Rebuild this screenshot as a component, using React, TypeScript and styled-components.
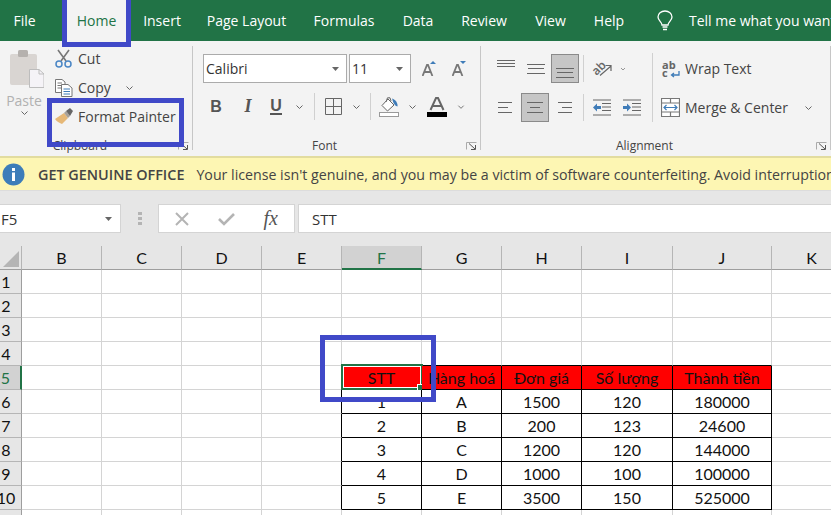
import React from 'react';
import styled, { createGlobalStyle } from 'styled-components';

const GlobalStyle = createGlobalStyle`
  html, body {
    margin: 0;
    padding: 0;
    background: #fff;
    font-family: "Open Sans", "Noto Sans", sans-serif;
  }
`;

const cellFont = `Lato, "Open Sans", sans-serif`;

const Window = styled.div`
  position: relative;
  width: 831px;
  height: 515px;
  overflow: hidden;
  display: flex;
  flex-direction: column;
  background: #fff;
`;

/* ---- tabs ---- */
const TabBar = styled.div`
  height: 41px;
  flex: none;
  background: #217346;
  display: flex;
  align-items: stretch;
  white-space: nowrap;
  overflow: hidden;
`;
const Tab = styled.div<{ $active?: boolean; $w: number }>`
  width: ${(p) => p.$w}px;
  flex: none;
  display: flex;
  align-items: center;
  justify-content: center;
  font-size: 14px;
  color: ${(p) => (p.$active ? '#217346' : '#fff')};
  background: ${(p) => (p.$active ? '#f3f3f3' : 'transparent')};
`;
const TellMe = styled.div`
  display: flex;
  align-items: center;
  gap: 16px;
  margin-left: 19px;
  color: #fff;
  font-size: 14px;
`;

/* ---- ribbon ---- */
const Ribbon = styled.div`
  height: 115px;
  flex: none;
  background: #f3f3f3;
  display: flex;
  font-size: 14px;
  color: #444;
`;
const Group = styled.div<{ $w: number }>`
  position: relative;
  width: ${(p) => p.$w}px;
  flex: none;
  margin-top: 5px;
  height: 104px;
  box-sizing: border-box;
  border-right: 1px solid #c6c6c6;
  display: flex;
  flex-direction: column;
`;
const GroupBody = styled.div`
  flex: 1;
  display: flex;
`;
const GroupLabel = styled.div<{ $pr: number }>`
  height: 19px;
  margin-bottom: -5px;
  padding-right: ${(p) => p.$pr}px;
  text-align: center;
  font-size: 12px;
  line-height: 19px;
  color: #444;
`;
const Launcher = styled.svg`
  position: absolute;
  right: 3px;
  bottom: 0;
`;
const PasteCol = styled.div`
  width: 53px;
  flex: none;
  display: flex;
  flex-direction: column;
  align-items: center;
  color: #b1b1b1;
  padding-top: 4px;
  padding-right: 5px;
  box-sizing: border-box;
`;
const PasteArt = styled.div`
  margin-left: 5px;
  height: 38px;
`;
const PasteLabel = styled.div`
  margin-top: 3px;
  font-size: 14px;
  line-height: 19px;
`;
const ClipActions = styled.div`
  display: flex;
  flex-direction: column;
  margin-top: -2px;
`;
const ClipRow = styled.div`
  height: 29px;
  display: flex;
  align-items: center;
  gap: 4px;
  white-space: nowrap;
`;
const IconSlot = styled.span`
  width: 21px;
  display: flex;
  justify-content: center;
  flex: none;
`;
const CopyChevron = styled.span`
  display: flex;
  margin-left: 10px;
`;
const Column = styled.div<{ $pad?: string; $gap?: number }>`
  display: flex;
  flex-direction: column;
  gap: ${(p) => p.$gap ?? 0}px;
  padding: ${(p) => p.$pad ?? 0};
`;
const Row = styled.div<{ $gap?: number }>`
  display: flex;
  align-items: center;
  gap: ${(p) => p.$gap ?? 0}px;
`;
const Combo = styled.div<{ $w: number }>`
  width: ${(p) => p.$w}px;
  height: 29px;
  box-sizing: border-box;
  background: #fff;
  border: 1px solid #ababab;
  display: flex;
  align-items: center;
  justify-content: space-between;
  padding: 0 7px 0 2px;
  font-size: 14px;
  color: #333;
`;
const ToolSlot = styled.div<{ $w: number; $on?: boolean }>`
  width: ${(p) => p.$w}px;
  height: 29px;
  box-sizing: border-box;
  flex: none;
  display: flex;
  align-items: center;
  justify-content: center;
  background: ${(p) => (p.$on ? '#c6c6c6' : 'transparent')};
  border: ${(p) => (p.$on ? '1px solid #8a8a8a' : 'none')};
`;
const Bold = styled.span<{ $under?: boolean }>`
  font-family: "Liberation Sans", sans-serif;
  font-size: 16px;
  font-weight: 700;
  color: #555;
  border-bottom: ${(p) => (p.$under ? '2px solid #555' : 'none')};
  line-height: ${(p) => (p.$under ? '14px' : 'normal')};
`;
const Italic = styled.span`
  font-family: "Liberation Serif", serif;
  font-size: 18px;
  font-weight: 700;
  font-style: italic;
  color: #555;
`;
const VSep = styled.div`
  width: 1px;
  height: 27px;
  background: #d0d0d0;
  flex: none;
`;
const AlignTools = styled(Column)`
  width: 161px;
  flex: none;
`;
const TallDivider = styled.div`
  width: 1px;
  height: 69px;
  margin: 7px 8px 0 0;
  background: #d0d0d0;
  flex: none;
`;
const WideLabel = styled.div`
  display: flex;
  align-items: center;
  gap: 5px;
  white-space: nowrap;
  height: 29px;
`;
const WideIcon = styled.span`
  width: 19px;
  display: flex;
  justify-content: flex-end;
  flex: none;
`;

/* ---- notice ---- */
const Notice = styled.div`
  height: 32px;
  flex: none;
  background: #fdf6b3;
  border-top: 2px solid #e2dc9f;
  border-bottom: 1px solid #dcdcdc;
  display: flex;
  align-items: center;
  padding-left: 2px;
  font-size: 14.2px;
  color: #444;
  white-space: nowrap;
  overflow: hidden;
`;
const NoticeIcon = styled.svg`
  flex: none;
`;
const NoticeTitle = styled.b`
  font-weight: 600;
  font-size: 14.4px;
  margin: 0 12px 0 13px;
  flex: none;
`;

/* ---- formula bar ---- */
const FormulaBar = styled.div`
  height: 55px;
  flex: none;
  box-sizing: border-box;
  background: #e6e6e6;
  padding: 13px 0 13px;
  display: flex;
  align-items: stretch;
`;
const NameBox = styled.div`
  width: 121px;
  flex: none;
  box-sizing: border-box;
  background: #fff;
  border: 1px solid #d4d4d4;
  border-left: none;
  display: flex;
  align-items: center;
  justify-content: space-between;
  padding: 0 8px 0 1px;
  font-size: 15px;
  color: #333;
`;
const Grip = styled.div`
  width: 37px;
  flex: none;
  display: flex;
  align-items: center;
  justify-content: center;
`;
const FxBox = styled.div`
  width: 137px;
  flex: none;
  box-sizing: border-box;
  background: #fff;
  border: 1px solid #d4d4d4;
  margin-right: 3px;
  display: flex;
  align-items: center;
  justify-content: space-between;
  padding: 0 16px 0 15px;
`;
const FxText = styled.span`
  font-family: "Liberation Serif", serif;
  font-style: italic;
  font-size: 20px;
  color: #555;
`;
const FormulaInput = styled.div`
  flex: 1;
  box-sizing: border-box;
  background: #fff;
  border: 1px solid #d4d4d4;
  border-right: none;
  padding-left: 13px;
  display: flex;
  align-items: center;
  font-size: 15px;
  color: #333;
`;

/* ---- sheet ---- */
const Sheet = styled.div`
  flex: 1;
  display: grid;
  grid-template-columns: 22px 80px 80px 80px 80px 80px 80px 80px 91px 99px 80px;
  grid-auto-rows: 24px;
  grid-template-rows: 24px;
  font-family: ${cellFont};
  font-size: 16px;
  color: #111;
  background: #fff;
`;
const Corner = styled.div`
  background: #e6e6e6;
  border-right: 1px solid #b5b5b5;
  border-bottom: 1px solid #9e9e9e;
  display: flex;
  align-items: flex-end;
  justify-content: flex-end;
  padding: 0 2px 2px 0;
`;
const ColHead = styled.div<{ $sel?: boolean }>`
  background: ${(p) => (p.$sel ? '#d2d2d2' : '#e6e6e6')};
  color: ${(p) => (p.$sel ? '#217346' : '#111')};
  border-right: 1px solid #b5b5b5;
  border-bottom: ${(p) => (p.$sel ? '2px solid #217346' : '1px solid #9e9e9e')};
  display: flex;
  align-items: center;
  justify-content: center;
`;
const RowHead = styled.div<{ $sel?: boolean }>`
  background: ${(p) => (p.$sel ? '#d2d2d2' : '#e6e6e6')};
  color: ${(p) => (p.$sel ? '#217346' : '#111')};
  border-right: ${(p) => (p.$sel ? '2px solid #217346' : '1px solid #9e9e9e')};
  border-bottom: 1px solid #b5b5b5;
  display: flex;
  align-items: center;
  justify-content: center;
  padding-right: 9px;
`;
const Cell = styled.div<{ $fill?: boolean; $r?: boolean; $b?: boolean }>`
  position: relative;
  background: ${(p) => (p.$fill ? '#ff0000' : '#fff')};
  border-right: 1px solid ${(p) => (p.$r ? '#000' : '#d4d4d4')};
  border-bottom: 1px solid ${(p) => (p.$b ? '#000' : '#d4d4d4')};
  display: flex;
  align-items: center;
  justify-content: center;
  white-space: nowrap;
`;
const Selection = styled.div`
  position: absolute;
  left: -1px;
  top: -2px;
  right: -2px;
  bottom: -1px;
  border: 2px solid #217346;
  box-shadow: inset 0 0 0 1px #fff;
  pointer-events: none;
`;
const Handle = styled.div`
  position: absolute;
  right: -3px;
  bottom: -3px;
  width: 5px;
  height: 5px;
  background: #217346;
  border: 1px solid #fff;
`;

/* ---- the blue marks drawn over the screenshot ---- */
const Mark = styled.div<{ $x: number; $y: number; $w: number; $h: number }>`
  position: absolute;
  left: ${(p) => p.$x}px;
  top: ${(p) => p.$y}px;
  width: ${(p) => p.$w}px;
  height: ${(p) => p.$h}px;
  box-sizing: border-box;
  border: 5px solid #4049c8;
  pointer-events: none;
`;

const Chevron = () => (
  <svg width="9" height="6" viewBox="0 0 9 6">
    <path d="M1.5 1.5 L4.5 4.5 L7.5 1.5" fill="none" stroke="#666" strokeWidth="1" />
  </svg>
);
const ComboArrow = () => (
  <svg width="7" height="4" viewBox="0 0 7 4">
    <path d="M0 0 H7 L3.5 4 Z" fill="#666" />
  </svg>
);
const Corners = () => (
  <Launcher width="11" height="8" viewBox="0 0 11 8">
    <path d="M.5 7.5 V.5 H10.5" fill="none" stroke="#aaa" />
    <path d="M3 1.5 L9 7 M9.5 3 V7.5 H5" fill="none" stroke="#555" />
  </Launcher>
);
const PasteIcon = () => (
  <svg width="35" height="38" viewBox="0 0 35 38">
    <rect x="1" y="4" width="27" height="31" rx="2" fill="#d9d5d2" />
    <rect x="9" y="0" width="10" height="7" rx="1.5" fill="#b5b1ae" />
    <path d="M20.5 19.5 H30 L35 24 V37.5 H20.5 Z" fill="#f5f3f7" stroke="#bdbdbd" />
    <path d="M30 19.5 V24 H35" fill="none" stroke="#bdbdbd" />
  </svg>
);
const ScissorsIcon = () => (
  <svg width="17" height="19" viewBox="0 0 17 19">
    <path d="M3 1 L11 12 M14 1 L6 12" stroke="#777" strokeWidth="1.6" fill="none" />
    <circle cx="4" cy="15" r="3" fill="none" stroke="#4a86c5" strokeWidth="1.5" />
    <circle cx="13" cy="15" r="3" fill="none" stroke="#4a86c5" strokeWidth="1.5" />
  </svg>
);
const CopyIcon = () => (
  <svg width="18" height="18" viewBox="0 0 18 18">
    <path d="M.5 .5 H7 L10 3 V13.5 H.5 Z" fill="#fff" stroke="#777" />
    <path d="M2.5 4 H7 M2.5 6.5 H8 M2.5 9 H8" stroke="#777" />
    <path d="M6.5 5.5 H13 L17 9 V17.5 H6.5 Z" fill="#fff" stroke="#777" />
    <path d="M8.5 10 H15 M8.5 12.5 H15 M8.5 15 H15" stroke="#3f7cb8" />
  </svg>
);
const BrushIcon = () => (
  <svg width="18" height="17" viewBox="0 0 18 17">
    <path d="M0 11 L9 5 L13 10 L7 16 C5 15 2 14 0 11 Z" fill="#e6b877" />
    <path d="M9 5 L11 3 L15 8 L13 10 Z" fill="#a8a29a" />
    <path d="M11 3 L15 0 L18 3 L15 8 Z" fill="#666" />
  </svg>
);
const GrowIcon = ({ down }: { down?: boolean }) => (
  <svg width="14" height="15" viewBox="0 0 14 15">
    <path d="M.6 15 L5 4 H6 L10.4 15 M2.5 11 H8.5" fill="none" stroke="#777" strokeWidth="1.8" />
    {down ? <path d="M8 0 H14 L11 3 Z" fill="#3f7cb8" /> : <path d="M8 3 L11 0 L14 3 Z" fill="#3f7cb8" />}
  </svg>
);
const BordersIcon = () => (
  <svg width="17" height="17" viewBox="0 0 17 17">
    <path d="M.5 .5 H16.5 V16.5 H.5 Z M8.5 .5 V16.5 M.5 8.5 H16.5" fill="none" stroke="#666" />
  </svg>
);
const FillIcon = () => (
  <svg width="20" height="20" viewBox="0 0 20 20">
    <path d="M9 2 L15 8 L8.5 14 L3 8.5 Z" fill="#fff" stroke="#666" />
    <path d="M7 5 L8.5 .8 H11 L12 4" fill="none" stroke="#666" />
    <path d="M13 1.5 C16.5 2.5 19 6 18.5 9.5 C16.5 9 15.5 7.5 14.5 6 Z" fill="#3f7cb8" />
    <rect x="0.5" y="15.5" width="19" height="4" fill="#fff" stroke="#999" />
  </svg>
);
const FontColorIcon = () => (
  <svg width="20" height="20" viewBox="0 0 20 20">
    <path d="M3.5 13 L9 1 H11 L16.5 13 M6 9 H14" fill="none" stroke="#666" strokeWidth="2" />
    <rect x="0" y="15" width="20" height="5" fill="#000" />
  </svg>
);
const Lines = ({ rows }: { rows: [number, number, number][] }) => (
  <svg width="18" height="18" viewBox="0 0 18 18">
    {rows.map(([x, y, len], i) => (
      <rect key={i} x={x} y={y} width={len} height="1" fill="#666" />
    ))}
  </svg>
);
const OrientIcon = () => (
  <svg width="20" height="18" viewBox="0 0 20 18">
    <text x="0" y="13" fontSize="12" fontWeight="600" fontFamily="Open Sans" fill="#666" transform="rotate(-45 6 9)">ab</text>
    <path d="M8 15.5 L19 6 M13.5 5.5 H19 V11" fill="none" stroke="#666" strokeWidth="1.2" />
  </svg>
);
const IndentIcon = ({ out }: { out?: boolean }) => (
  <svg width="18" height="18" viewBox="0 0 18 18">
    <path d="M0 1 H18 M9 4.5 H18 M9 8 H18 M9 11.5 H18 M0 16 H18" stroke="#666" fill="none" />
    {out ? (
      <path d="M0 8.5 L4 4.5 V7 H8 V10 H4 V12.5 Z" fill="#3f7cb8" />
    ) : (
      <path d="M8 8.5 L4 4.5 V7 H0 V10 H4 V12.5 Z" fill="#3f7cb8" />
    )}
  </svg>
);
const WrapIcon = () => (
  <svg width="18" height="18" viewBox="0 0 18 18">
    <text x="0" y="8.5" fontSize="11" fontWeight="700" fontFamily="Open Sans" fill="#666">ab</text>
    <text x="0" y="17" fontSize="11" fontWeight="700" fontFamily="Open Sans" fill="#666">c</text>
    <path d="M17 11 V15 H10 M12 13 L9.5 15 L12 17" fill="none" stroke="#3f7cb8" strokeWidth="1.3" />
  </svg>
);
const MergeIcon = () => (
  <svg width="19" height="19" viewBox="0 0 19 19">
    <path d="M.5 .5 H18.5 V18.5 H.5 Z M.5 5 H18.5 M.5 14 H18.5 M9.5 .5 V5 M9.5 14 V18.5" fill="#fff" stroke="#777" strokeWidth="1.2" />
    <path d="M3 9.5 H16 M5.5 7 L3 9.5 L5.5 12 M13.5 7 L16 9.5 L13.5 12" fill="none" stroke="#3f7cb8" strokeWidth="1.2" />
  </svg>
);
const BulbIcon = () => (
  <svg width="16" height="21" viewBox="0 0 16 21">
    <path d="M5 15 C5 12 1 10.5 1 7 C1 3.5 4 1 8 1 C12 1 15 3.5 15 7 C15 10.5 11 12 11 15 Z" fill="none" stroke="#fff" strokeWidth="1.3" />
    <path d="M5.5 17 H10.5 M6 19.5 H10" stroke="#fff" strokeWidth="1.4" />
  </svg>
);
const InfoIcon = () => (
  <NoticeIcon width="23" height="23" viewBox="0 0 23 23">
    <circle cx="11.5" cy="11.5" r="11" fill="#3d7db9" />
    <rect x="10" y="9.5" width="3" height="8.5" fill="#fff" />
    <rect x="10" y="5" width="3" height="3" fill="#fff" />
  </NoticeIcon>
);

const columns = ['B', 'C', 'D', 'E', 'F', 'G', 'H', 'I', 'J', 'K'];
const tableRows: string[][] = [
  ['STT', 'Hàng hoá', 'Đơn giá', 'Số lượng', 'Thành tiền'],
  ['1', 'A', '1500', '120', '180000'],
  ['2', 'B', '200', '123', '24600'],
  ['3', 'C', '1200', '120', '144000'],
  ['4', 'D', '1000', '100', '100000'],
  ['5', 'E', '3500', '150', '525000'],
];

function renderCell(row: number, colIdx: number) {
  // table sits in F5:J10, colIdx 4 is F
  const inRows = row >= 5 && row <= 10;
  const inCols = colIdx >= 4 && colIdx <= 8;
  const text = inRows && inCols ? tableRows[row - 5][colIdx - 4] : '';
  const right = inRows && colIdx >= 3 && colIdx <= 8;
  const bottom = row >= 4 && row <= 10 && inCols;
  const isActive = row === 5 && colIdx === 4;
  return (
    <Cell key={`${row}-${colIdx}`} $fill={row === 5 && inCols} $r={right} $b={bottom}>
      {text}
      {isActive && (
        <Selection>
          <Handle />
        </Selection>
      )}
    </Cell>
  );
}

export default function App() {
  return (
    <Window>
      <GlobalStyle />
      <TabBar>
        <Tab $w={49}>File</Tab>
        <Tab $w={14} />
        <Tab $w={67} $active>Home</Tab>
        <Tab $w={64}>Insert</Tab>
        <Tab $w={105}>Page Layout</Tab>
        <Tab $w={90}>Formulas</Tab>
        <Tab $w={58}>Data</Tab>
        <Tab $w={74}>Review</Tab>
        <Tab $w={59}>View</Tab>
        <Tab $w={58}>Help</Tab>
        <TellMe>
          <BulbIcon />
          <span>Tell me what you want to do</span>
        </TellMe>
      </TabBar>

      <Ribbon>
        <Group $w={193}>
          <GroupBody>
            <PasteCol>
              <PasteArt><PasteIcon /></PasteArt>
              <PasteLabel>Paste</PasteLabel>
              <Chevron />
            </PasteCol>
            <ClipActions>
              <ClipRow><IconSlot><ScissorsIcon /></IconSlot>Cut</ClipRow>
              <ClipRow><IconSlot><CopyIcon /></IconSlot>Copy<CopyChevron><Chevron /></CopyChevron></ClipRow>
              <ClipRow><IconSlot><BrushIcon /></IconSlot>Format Painter</ClipRow>
            </ClipActions>
          </GroupBody>
          <GroupLabel $pr={32}>Clipboard</GroupLabel>
          <Corners />
        </Group>

        <Group $w={288}>
          <GroupBody>
            <Column $pad="8px 0 0 10px" $gap={9}>
              <Row $gap={2}>
                <Combo $w={144}>Calibri<ComboArrow /></Combo>
                <Combo $w={62}>11<ComboArrow /></Combo>
                <ToolSlot $w={31}><GrowIcon /></ToolSlot>
                <ToolSlot $w={25}><GrowIcon down /></ToolSlot>
              </Row>
              <Row>
                <ToolSlot $w={26}><Bold>B</Bold></ToolSlot>
                <ToolSlot $w={38}><Italic>I</Italic></ToolSlot>
                <ToolSlot $w={18}><Bold $under>U</Bold></ToolSlot>
                <ToolSlot $w={29}><Chevron /></ToolSlot>
                <VSep />
                <ToolSlot $w={36}><BordersIcon /></ToolSlot>
                <ToolSlot $w={10}><Chevron /></ToolSlot>
                <ToolSlot $w={9} />
                <VSep />
                <ToolSlot $w={36}><FillIcon /></ToolSlot>
                <ToolSlot $w={10}><Chevron /></ToolSlot>
                <ToolSlot $w={40}><FontColorIcon /></ToolSlot>
                <ToolSlot $w={8}><Chevron /></ToolSlot>
              </Row>
            </Column>
          </GroupBody>
          <GroupLabel $pr={24}>Font</GroupLabel>
          <Corners />
        </Group>

        <Group $w={350}>
          <GroupBody>
            <AlignTools $pad="8px 0 0 10px" $gap={10}>
              <Row>
                <ToolSlot $w={30}><Lines rows={[[0, 0, 18], [0, 3, 18], [0, 6, 18]]} /></ToolSlot>
                <ToolSlot $w={30}><Lines rows={[[0, 4, 18], [1, 8, 16], [0, 13, 18]]} /></ToolSlot>
                <ToolSlot $w={28} $on><Lines rows={[[0, 8, 18], [1, 12, 16], [0, 17, 18]]} /></ToolSlot>
                <ToolSlot $w={4} />
                <VSep />
                <ToolSlot $w={36}><OrientIcon /></ToolSlot>
                <ToolSlot $w={6}><Chevron /></ToolSlot>
              </Row>
              <Row>
                <ToolSlot $w={30}><Lines rows={[[1, 3, 14], [1, 8, 10], [1, 13, 14]]} /></ToolSlot>
                <ToolSlot $w={28} $on><Lines rows={[[1, 3, 16], [4, 8, 10], [1, 13, 16]]} /></ToolSlot>
                <ToolSlot $w={30}><Lines rows={[[3, 3, 14], [7, 8, 10], [3, 13, 14]]} /></ToolSlot>
                <ToolSlot $w={4} />
                <VSep />
                <ToolSlot $w={36}><IndentIcon out /></ToolSlot>
                <ToolSlot $w={24}><IndentIcon /></ToolSlot>
              </Row>
            </AlignTools>
            <TallDivider />
            <Column $pad="8px 0 0 0" $gap={10}>
              <WideLabel><WideIcon><WrapIcon /></WideIcon><span>Wrap Text</span></WideLabel>
              <Row>
                <WideLabel><WideIcon><MergeIcon /></WideIcon><span>Merge &amp; Center</span></WideLabel>
                <ToolSlot $w={42}><Chevron /></ToolSlot>
              </Row>
            </Column>
          </GroupBody>
          <GroupLabel $pr={22}>Alignment</GroupLabel>
          <Corners />
        </Group>
      </Ribbon>

      <Notice>
        <InfoIcon />
        <NoticeTitle>GET GENUINE OFFICE</NoticeTitle>
        Your license isn't genuine, and you may be a victim of software counterfeiting. Avoid interruption
      </Notice>

      <FormulaBar>
        <NameBox>F5<ComboArrow /></NameBox>
        <Grip>
          <svg width="4" height="14" viewBox="0 0 4 14">
            <rect y="0" width="4" height="3" fill="#b4b4b4" />
            <rect y="5" width="4" height="3" fill="#b4b4b4" />
            <rect y="10" width="4" height="3" fill="#b4b4b4" />
          </svg>
        </Grip>
        <FxBox>
          <svg width="16" height="14" viewBox="0 0 16 14">
            <path d="M2 1 L14 13 M14 1 L2 13" stroke="#b4b4b4" strokeWidth="2" fill="none" />
          </svg>
          <svg width="18" height="14" viewBox="0 0 18 14">
            <path d="M1 7 L6 12 L16 2" stroke="#b4b4b4" strokeWidth="2.6" fill="none" />
          </svg>
          <FxText>fx</FxText>
        </FxBox>
        <FormulaInput>STT</FormulaInput>
      </FormulaBar>

      <Sheet>
        <Corner>
          <svg width="16" height="16" viewBox="0 0 16 16">
            <path d="M16 0 V16 H0 Z" fill="#b5b5b5" />
          </svg>
        </Corner>
        {columns.map((c) => (
          <ColHead key={c} $sel={c === 'F'}>{c}</ColHead>
        ))}
        {Array.from({ length: 11 }, (_, i) => i + 1).map((row) => (
          <React.Fragment key={row}>
            <RowHead $sel={row === 5}>{row}</RowHead>
            {columns.map((_, colIdx) => renderCell(row, colIdx))}
          </React.Fragment>
        ))}
      </Sheet>

      <Mark $x={62} $y={-5} $w={69} $h={52} />
      <Mark $x={47} $y={98} $w={137} $h={49} />
      <Mark $x={320} $y={335} $w={116} $h={67} />
    </Window>
  );
}
